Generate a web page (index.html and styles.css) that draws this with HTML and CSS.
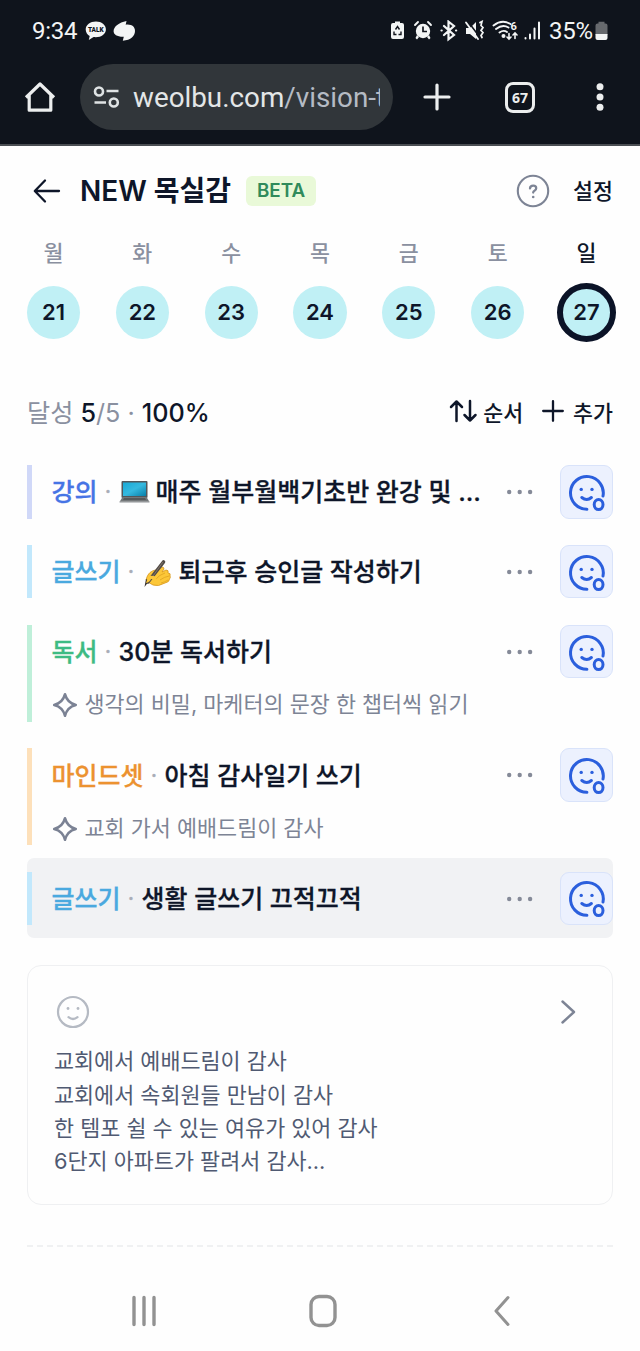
FILE: index.html
```html
<!DOCTYPE html>
<html lang="ko">
<head>
<meta charset="utf-8">
<title>NEW 목실감</title>
<link rel="stylesheet" href="styles.css">
</head>
<body>
<svg class="defs" width="0" height="0" aria-hidden="true">
  <symbol id="smile-badge" viewBox="0 0 54 54">
    <g fill="none" stroke="#2b5fdd" stroke-width="3" stroke-linecap="round">
      <path d="M43 30A16.4 16.4 0 1 0 26.9 43.3"/>
      <path d="M21.8 31.5q5 4 9.600 0"/>
      <ellipse cx="38.6" cy="38.6" rx="4.400" ry="5"/>
    </g>
    <circle cx="21.2" cy="23.4" r="1.7" fill="#2b5fdd"/><circle cx="32" cy="23.4" r="1.7" fill="#2b5fdd"/>
  </symbol>
  <symbol id="dots" viewBox="0 0 28 6"><g fill="#858a98"><circle cx="3.2" cy="3" r="2.2"/><circle cx="13.7" cy="3" r="2.2"/><circle cx="24.1" cy="3" r="2.2"/></g></symbol>
  <symbol id="spark" viewBox="0 0 24 24"><path d="M12 2Q14 10 22 12Q14 14 12 22Q10 14 2 12Q10 10 12 2Z" fill="none" stroke="#7b8294" stroke-width="2.3" stroke-linejoin="round"/></symbol>
</svg>

<header class="chrome">
  <div class="status">
    <span class="clock">9:34</span>
    <svg class="talk" width="22" height="20" viewBox="0 0 22 20"><path d="M11 .5C5.200.5.700 4 .7 8.500c0 3 1.800 5.300 4 6.600L3.800 19l4.800-2.900c7 .9 12.300-2.800 12.300-7.600C20.900 4 16.500.5 11 .5Z" fill="#f3f5f5"/><text x="10.800" y="11" text-anchor="middle" class="talk-text">TALK</text></svg>
    <svg class="swirl" width="23" height="20" viewBox="0 0 23 20"><path d="M13.500 0L12.700 3.700C19 3 22 6 22 10c0 5-4 9-12.200 9.800l1-4C4 16 .6 13.500.6 10.300.6 5.500 6 1.500 13.500 0Z" fill="#f3f5f5"/></svg>
    <span class="grow"></span>
    <svg class="indicators" width="157" height="22" viewBox="0 0 157 22">
      <g fill="#f3f5f5" stroke="none">
        <path d="M5 3V1.500h5V3h2q2 0 2 2v12q0 2-2 2H3q-2 0-2-2V5q0-2 2-2Z"/>
        <circle cx="33" cy="11" r="7.200"/><path d="M27 15l2 2-2 2.500-1.500-1.500ZM39 15l-2 2 2 2.500 1.500-1.500Z"/>
        <path d="M76 8h4l6-6v17l-6-5h-4Z"/>
      </g>
      <g fill="none" stroke="#11151d" stroke-width="1.400"><path d="M5.500 9.500L7.500 6.500L9.500 9.500M11 11.500v3H8.500M6.500 14.500H4v-3"/><path d="M33 6.500V11.500H37" stroke-width="1.700"/></g>
      <g fill="none" stroke="#f3f5f5" stroke-width="1.900" stroke-linecap="round">
        <path d="M25 5l3-3M41 5l-3-3"/>
        <path d="M54 6l10 9-5.500 4.300V1.700L64 6 54 15M51.500 10.500h.2M66 10.500h.2" stroke-width="2.200"/>
        <path d="M78 1.500L90 17.500" stroke="#11151d" stroke-width="1.500"/><path d="M76 2.500L88 19"/>
        <path d="M90 2.500l2-1-1 4 2 2-2 3 2 2-2 3 1 2" stroke-width="1.700"/>
        <path d="M103.500 5.500q8.500-6.500 17-1.500M106 9q6.500-5 12.500-1.500M109.500 12.500q4-3 7.500-.5"/>
        <path d="M119 13.500v5.500M117 17l2 2 2-2M125 18.500V13M123 15l2-2 2 2" stroke-width="1.600"/>
        <path d="M135.500 18v.5M140 14.500V18.500M144.500 8.500V18.500M149 2.500V18.500" stroke-width="2"/>
      </g>
      <circle cx="113.500" cy="16" r="2" fill="#f3f5f5"/>
      <text x="120.500" y="9.500" class="six">6</text>
    </svg>
    <span class="pct">35%</span>
    <svg class="battery" width="13" height="20" viewBox="0 0 13 20"><path d="M3.500 2.500V.8h6v1.700h1q2 0 2 2V14H.5V4.500q0-2 2-2Z" fill="#66696d"/><path d="M.5 13h12v4q0 2-2 2h-8q-2 0-2-2Z" fill="#f3f5f5"/></svg>
  </div>
  <div class="toolbar">
    <svg class="home" width="32" height="32" viewBox="0 0 32 32"><path d="M2 16.500L16 3L30 16.500M5.200 14V29.200H26.800V14" fill="none" stroke="#eceeee" stroke-width="3.200" stroke-linejoin="round"/></svg>
    <div class="omnibox">
      <svg width="27" height="22" viewBox="0 0 27 22"><g fill="none" stroke="#dfe3e4" stroke-width="2.600"><circle cx="6" cy="5.500" r="4"/><circle cx="20.800" cy="16.500" r="4"/><path d="M13.500 5H25.500M1.500 16.500H13"/></g></svg>
      <span class="url">weolbu.com<span class="path">/vision-t</span></span>
    </div>
    <svg class="plus" width="28" height="28" viewBox="0 0 28 28"><path d="M14 2V26M2 14H26" stroke="#eceeee" stroke-width="3.200" stroke-linecap="round"/></svg>
    <span class="tabs">67</span>
    <svg class="kebab" width="8" height="28" viewBox="0 0 8 28"><g fill="#eceeee"><circle cx="4" cy="3.700" r="3.500"/><circle cx="4" cy="14" r="3.500"/><circle cx="4" cy="24.200" r="3.500"/></g></svg>
  </div>
</header>

<main class="page">
  <div class="titlebar">
    <svg class="back" width="28" height="26" viewBox="0 0 28 26"><path d="M26 13H2M12 2.500L1.800 13L12 23.500" fill="none" stroke="#0e1629" stroke-width="2.300" stroke-linecap="round" stroke-linejoin="round"/></svg>
    <h1 class="title">NEW 목실감</h1>
    <span class="beta">BETA</span>
    <span class="grow"></span>
    <svg class="help" width="34" height="34" viewBox="0 0 34 34"><g fill="none" stroke="#7d8495" stroke-width="2.100" stroke-linecap="round"><circle cx="17" cy="17" r="15.200"/><path d="M14 14.400q.2-2.700 3.200-2.700 3 0 3 2.600 0 1.600-1.700 2.500-1.300.7-1.300 1.700" stroke-width="2.300"/></g><circle cx="17.200" cy="23" r="1.300" fill="#7d8495"/></svg>
    <span class="settings">설정</span>
  </div>

  <div class="week">
    <div class="day"><span class="dow">월</span><span class="num">21</span></div>
    <div class="day"><span class="dow">화</span><span class="num">22</span></div>
    <div class="day"><span class="dow">수</span><span class="num">23</span></div>
    <div class="day"><span class="dow">목</span><span class="num">24</span></div>
    <div class="day"><span class="dow">금</span><span class="num">25</span></div>
    <div class="day"><span class="dow">토</span><span class="num">26</span></div>
    <div class="day today"><span class="dow">일</span><span class="num">27</span></div>
  </div>

  <div class="summary">
    <div class="progress">달성 <b>5</b>/5 <i>·</i> <b>100%</b></div>
    <span class="grow"></span>
    <svg class="sort" width="30" height="24" viewBox="0 0 30 24"><path d="M7.500 22V2.500M2 8L7.500 2.500L13 8M21 2V21.500M15.500 16L21 21.500L26.500 16" fill="none" stroke="#0e1629" stroke-width="2.500" stroke-linecap="round" stroke-linejoin="round"/></svg>
    <span class="action order">순서</span>
    <svg class="add" width="22" height="22" viewBox="0 0 22 22"><path d="M11 1.200V20.800M1.200 11H20.800" stroke="#0e1629" stroke-width="2.300" stroke-linecap="round"/></svg>
    <span class="action">추가</span>
  </div>

  <section class="list">
    <article class="item indigo">
      <div class="body"><div class="line"><span class="cat">강의</span><span class="sep">·</span>
        <svg class="emoji laptop" width="31" height="24" viewBox="0 0 31 24"><defs><linearGradient id="scr" x2="1" y2="1"><stop offset="0" stop-color="#18a9d6"/><stop offset=".5" stop-color="#35b9df"/><stop offset="1" stop-color="#087fa9"/></linearGradient></defs><rect x="2.500" y="1" width="26" height="17" rx="1" fill="#51575b"/><rect x="4" y="2.500" width="23" height="13.500" fill="url(#scr)"/><path d="M3.500 17h24l3 5H.5Z" fill="#737779"/><path d="M5 18h21l1 2H4Z" fill="#55595b"/><path d="M.5 21.500h30v1.300H.5Z" fill="#b8bbbd"/></svg>
        <span class="name">매주 월부월백기초반 완강 및 ...</span></div></div>
      <svg class="more" width="28" height="6"><use href="#dots"/></svg><span class="check"><svg width="54" height="54"><use href="#smile-badge"/></svg></span>
    </article>
    <article class="item sky">
      <div class="body"><div class="line"><span class="cat">글쓰기</span><span class="sep">·</span>
        <svg class="emoji hand" width="28" height="29" viewBox="0 0 28 29"><path d="M4 18C6 13 10 11 14 11l5-3q2 0 2 2l-2 3 4-2q3 0 2 3 3 0 2 3 1 1-.5 3 0 3-4.500 4-7 4-12 2Q4 23 3 21Z" fill="#fcc738" stroke="#d5951d" stroke-width=".8"/><path d="M13 20q3-4 9-6M17 21q4-3 9-4M18 24q4-1 7-3" fill="none" stroke="#e5ab26"/><path d="M20.500 3L5 23" stroke="#514b46" stroke-width="3.600" stroke-linecap="round"/><path d="M6 22L1.500 28L3 20Z" fill="#332d29"/><path d="M20 3L10 17" stroke="#82766c" stroke-width="1"/><path d="M5 18q5-3 9 1-2 2-6 1-1 3-5 4Z" fill="#fcc738"/></svg>
        <span class="name">퇴근후 승인글 작성하기</span></div></div>
      <svg class="more" width="28" height="6"><use href="#dots"/></svg><span class="check"><svg width="54" height="54"><use href="#smile-badge"/></svg></span>
    </article>
    <article class="item green">
      <div class="body"><div class="line"><span class="cat">독서</span><span class="sep">·</span><span class="name">30분 독서하기</span></div>
        <div class="note"><svg width="26" height="26"><use href="#spark"/></svg><span>생각의 비밀, 마케터의 문장 한 챕터씩 읽기</span></div></div>
      <svg class="more" width="28" height="6"><use href="#dots"/></svg><span class="check"><svg width="54" height="54"><use href="#smile-badge"/></svg></span>
    </article>
    <article class="item orange">
      <div class="body"><div class="line"><span class="cat">마인드셋</span><span class="sep">·</span><span class="name">아침 감사일기 쓰기</span></div>
        <div class="note"><svg width="26" height="26"><use href="#spark"/></svg><span>교회 가서 예배드림이 감사</span></div></div>
      <svg class="more" width="28" height="6"><use href="#dots"/></svg><span class="check"><svg width="54" height="54"><use href="#smile-badge"/></svg></span>
    </article>
    <article class="item sky active">
      <div class="body"><div class="line"><span class="cat">글쓰기</span><span class="sep">·</span><span class="name">생활 글쓰기 끄적끄적</span></div></div>
      <svg class="more" width="28" height="6"><use href="#dots"/></svg><span class="check"><svg width="54" height="54"><use href="#smile-badge"/></svg></span>
    </article>
  </section>

  <section class="card">
    <div class="card-head">
      <svg width="34" height="34" viewBox="0 0 34 34"><g fill="none" stroke="#b5bac3" stroke-width="2.200" stroke-linecap="round"><circle cx="17" cy="17" r="15"/><path d="M12.500 22.200q4.500 3.600 9 0"/></g><circle cx="12" cy="13.500" r="1.400" fill="#b5bac3"/><circle cx="22" cy="13.500" r="1.400" fill="#b5bac3"/></svg>
      <svg width="16" height="24" viewBox="0 0 16 24"><path d="M2.500 1.500L14 12L2.500 22.500" fill="none" stroke="#7d8495" stroke-width="2.400" stroke-linecap="round" stroke-linejoin="round"/></svg>
    </div>
    <p class="memo">교회에서 예배드림이 감사<br>교회에서 속회원들 만남이 감사<br>한 템포 쉴 수 있는 여유가 있어 감사<br>6단지 아파트가 팔려서 감사...</p>
  </section>
  <svg class="rule" width="587" height="2" viewBox="0 0 587 2"><path d="M0 1H587" stroke="#f0f1f2" stroke-width="2" stroke-dasharray="6 4"/></svg>
</main>

<nav class="navbar">
  <svg width="26" height="32" viewBox="0 0 26 32"><path d="M3 2.500V29.500M13 2.500V29.500M23 2.500V29.500" stroke="#929292" stroke-width="3.400" stroke-linecap="round"/></svg>
  <svg width="28" height="34" viewBox="0 0 28 34"><rect x="2" y="2.500" width="24" height="29" rx="8" fill="none" stroke="#929292" stroke-width="3.400"/></svg>
  <svg width="18" height="32" viewBox="0 0 18 32"><path d="M15 2.500L3 16L15 29.500" fill="none" stroke="#929292" stroke-width="3" stroke-linecap="round" stroke-linejoin="round"/></svg>
</nav>
</body>
</html>
```
FILE: styles.css
```css
* { box-sizing: border-box; }
body { margin: 0; width: 640px; height: 1351px; overflow: hidden; background: #fefefe; color: #0e1629; font-family: Inter, "Noto Sans CJK KR", sans-serif; display: flex; flex-direction: column; }
svg { flex: none; display: block; }
.defs { position: absolute; }
.grow { flex: 1; }
span, h1 { white-space: nowrap; }

.chrome { height: 146px; background: #0f141c; border-bottom: 2px solid #4a4e53; font-family: Roboto, sans-serif; }
.status { display: flex; align-items: center; height: 62px; padding: 0 32px 0 32px; color: #f3f5f5; }
.clock { width: 53px; font-size: 24px; letter-spacing: -0.3px; }
.swirl { margin-left: 6px; }
.talk-text { font: 900 6.5px Roboto, sans-serif; fill: #0f141c; }
.six { font: 700 11px Roboto, sans-serif; fill: #f3f5f5; }
.pct { width: 48px; padding-left: 2px; font-size: 24px; letter-spacing: -0.3px; }
.toolbar { display: flex; align-items: center; height: 70px; padding-left: 24px; }
.omnibox { display: flex; align-items: center; width: 313px; height: 66px; margin-left: 24px; padding-left: 13px; border-radius: 33px; background: #31363a; }
.url { width: 247px; margin-left: 13px; overflow: hidden; color: #e3e6e7; font-size: 27.800px; }
.path { color: #b5bbc4; }
.plus { margin-left: 30px; }
.tabs { width: 30px; height: 31px; margin-left: 54px; border: 3px solid #eceeee; border-radius: 8px; color: #eceeee; font: 700 14px/25px "Noto Sans", sans-serif; text-align: center; }
.kebab { margin-left: 61px; }

.page { height: 1124px; padding: 0 27px; }
.titlebar { display: flex; align-items: center; height: 89px; padding-left: 6px; }
.title { width: 153px; margin: 0 0 0 19px; font-size: 28px; font-weight: 600; letter-spacing: 0; line-height: 40px; }
.beta { width: 70px; height: 30px; margin-left: 13px; border-radius: 6px; background: #e9f9d8; color: #308b5b; font-size: 18.800px; font-weight: 600; line-height: 29px; text-align: center; }
.help { margin-right: -1px; }
.settings { margin-left: 24px; padding-bottom: 2px; font-size: 21.700px; font-weight: 500; }

.week { display: flex; justify-content: space-between; height: 124px; padding-top: 0.600px; }
.day { display: flex; flex-direction: column; align-items: center; width: 53px; }
.dow { height: 50px; color: #8a90a0; font-size: 21.700px; font-weight: 500; line-height: 35px; }
.num { width: 53.300px; height: 53.300px; border-radius: 50%; background: #c0f0f5; font-size: 22px; font-weight: 600; line-height: 53px; text-align: center; }
.today .dow { color: #0e1629; }
.today .num { width: 59px; height: 59px; margin: -3px; border: 6px solid #0b1327; line-height: 47px; }

.summary { display: flex; align-items: center; height: 93px; padding-top: 11px; }
.progress { color: #8a90a0; font-size: 25.200px; white-space: nowrap; }
.progress b { color: #0e1629; font-weight: 500; }
.progress i { font-style: normal; }
.action { font-size: 21.700px; font-weight: 500; }
.order { margin: 0 19px 0 4px; }
.add { margin-right: 9px; }

.list { margin-bottom: 27px; }
.item { display: flex; align-items: flex-start; padding: 13.300px 0; }
.body { flex: 1; min-width: 0; border-left: 5px solid; padding-left: 19.500px; }
.line { display: flex; align-items: center; height: 53.300px; padding-top: 1px; font-size: 25px; font-weight: 500; line-height: 36px; -webkit-text-stroke: 0.300px; }
.cat { flex: none; }
.sep { width: 21px; color: #a8adb7; font-size: 21px; text-align: center; }
.emoji { margin-right: 6px; }
.hand { margin: 2px 8px 0 1px; }
.more { margin: 24px 26px 0 0; }
.check { width: 53.300px; height: 53.300px; border: 1.500px solid #d9e3fa; border-radius: 9px; background: #ecf1fe; }
.check svg { margin: -0.500px -1px; }
.note { display: flex; align-items: flex-start; height: 43.400px; padding-top: 10px; color: #7d8495; font-size: 21.800px; line-height: 33px; }
.note svg { margin: 4px 7px 0 0; }
.indigo .body { border-color: #d0d8f8; } .indigo .cat { color: #4674e5; }
.sky .body { border-color: #c2e8fc; } .sky .cat { color: #4aa9df; }
.green .body { border-color: #bfefd9; } .green .cat { color: #3ebb83; }
.orange .body { border-color: #fde0ba; } .orange .cat { color: #ec9230; }
.active { border-radius: 7px; background: #f1f2f4; }

.card { height: 240px; padding: 29px 28px; border: 1.500px solid #eff0f2; border-radius: 14px; }
.card-head { display: flex; align-items: center; justify-content: space-between; height: 34px; padding: 0 8px 0 0; }
.memo { margin: 16px 0 0 -2px; color: #505a72; font-size: 21.800px; line-height: 33.400px; }
.rule { margin-top: 40px; }

.navbar { display: flex; align-items: center; height: 81px; padding-left: 131px; }
.navbar svg:nth-child(2) { margin-left: 152px; }
.navbar svg:nth-child(3) { margin-left: 156px; }
```
